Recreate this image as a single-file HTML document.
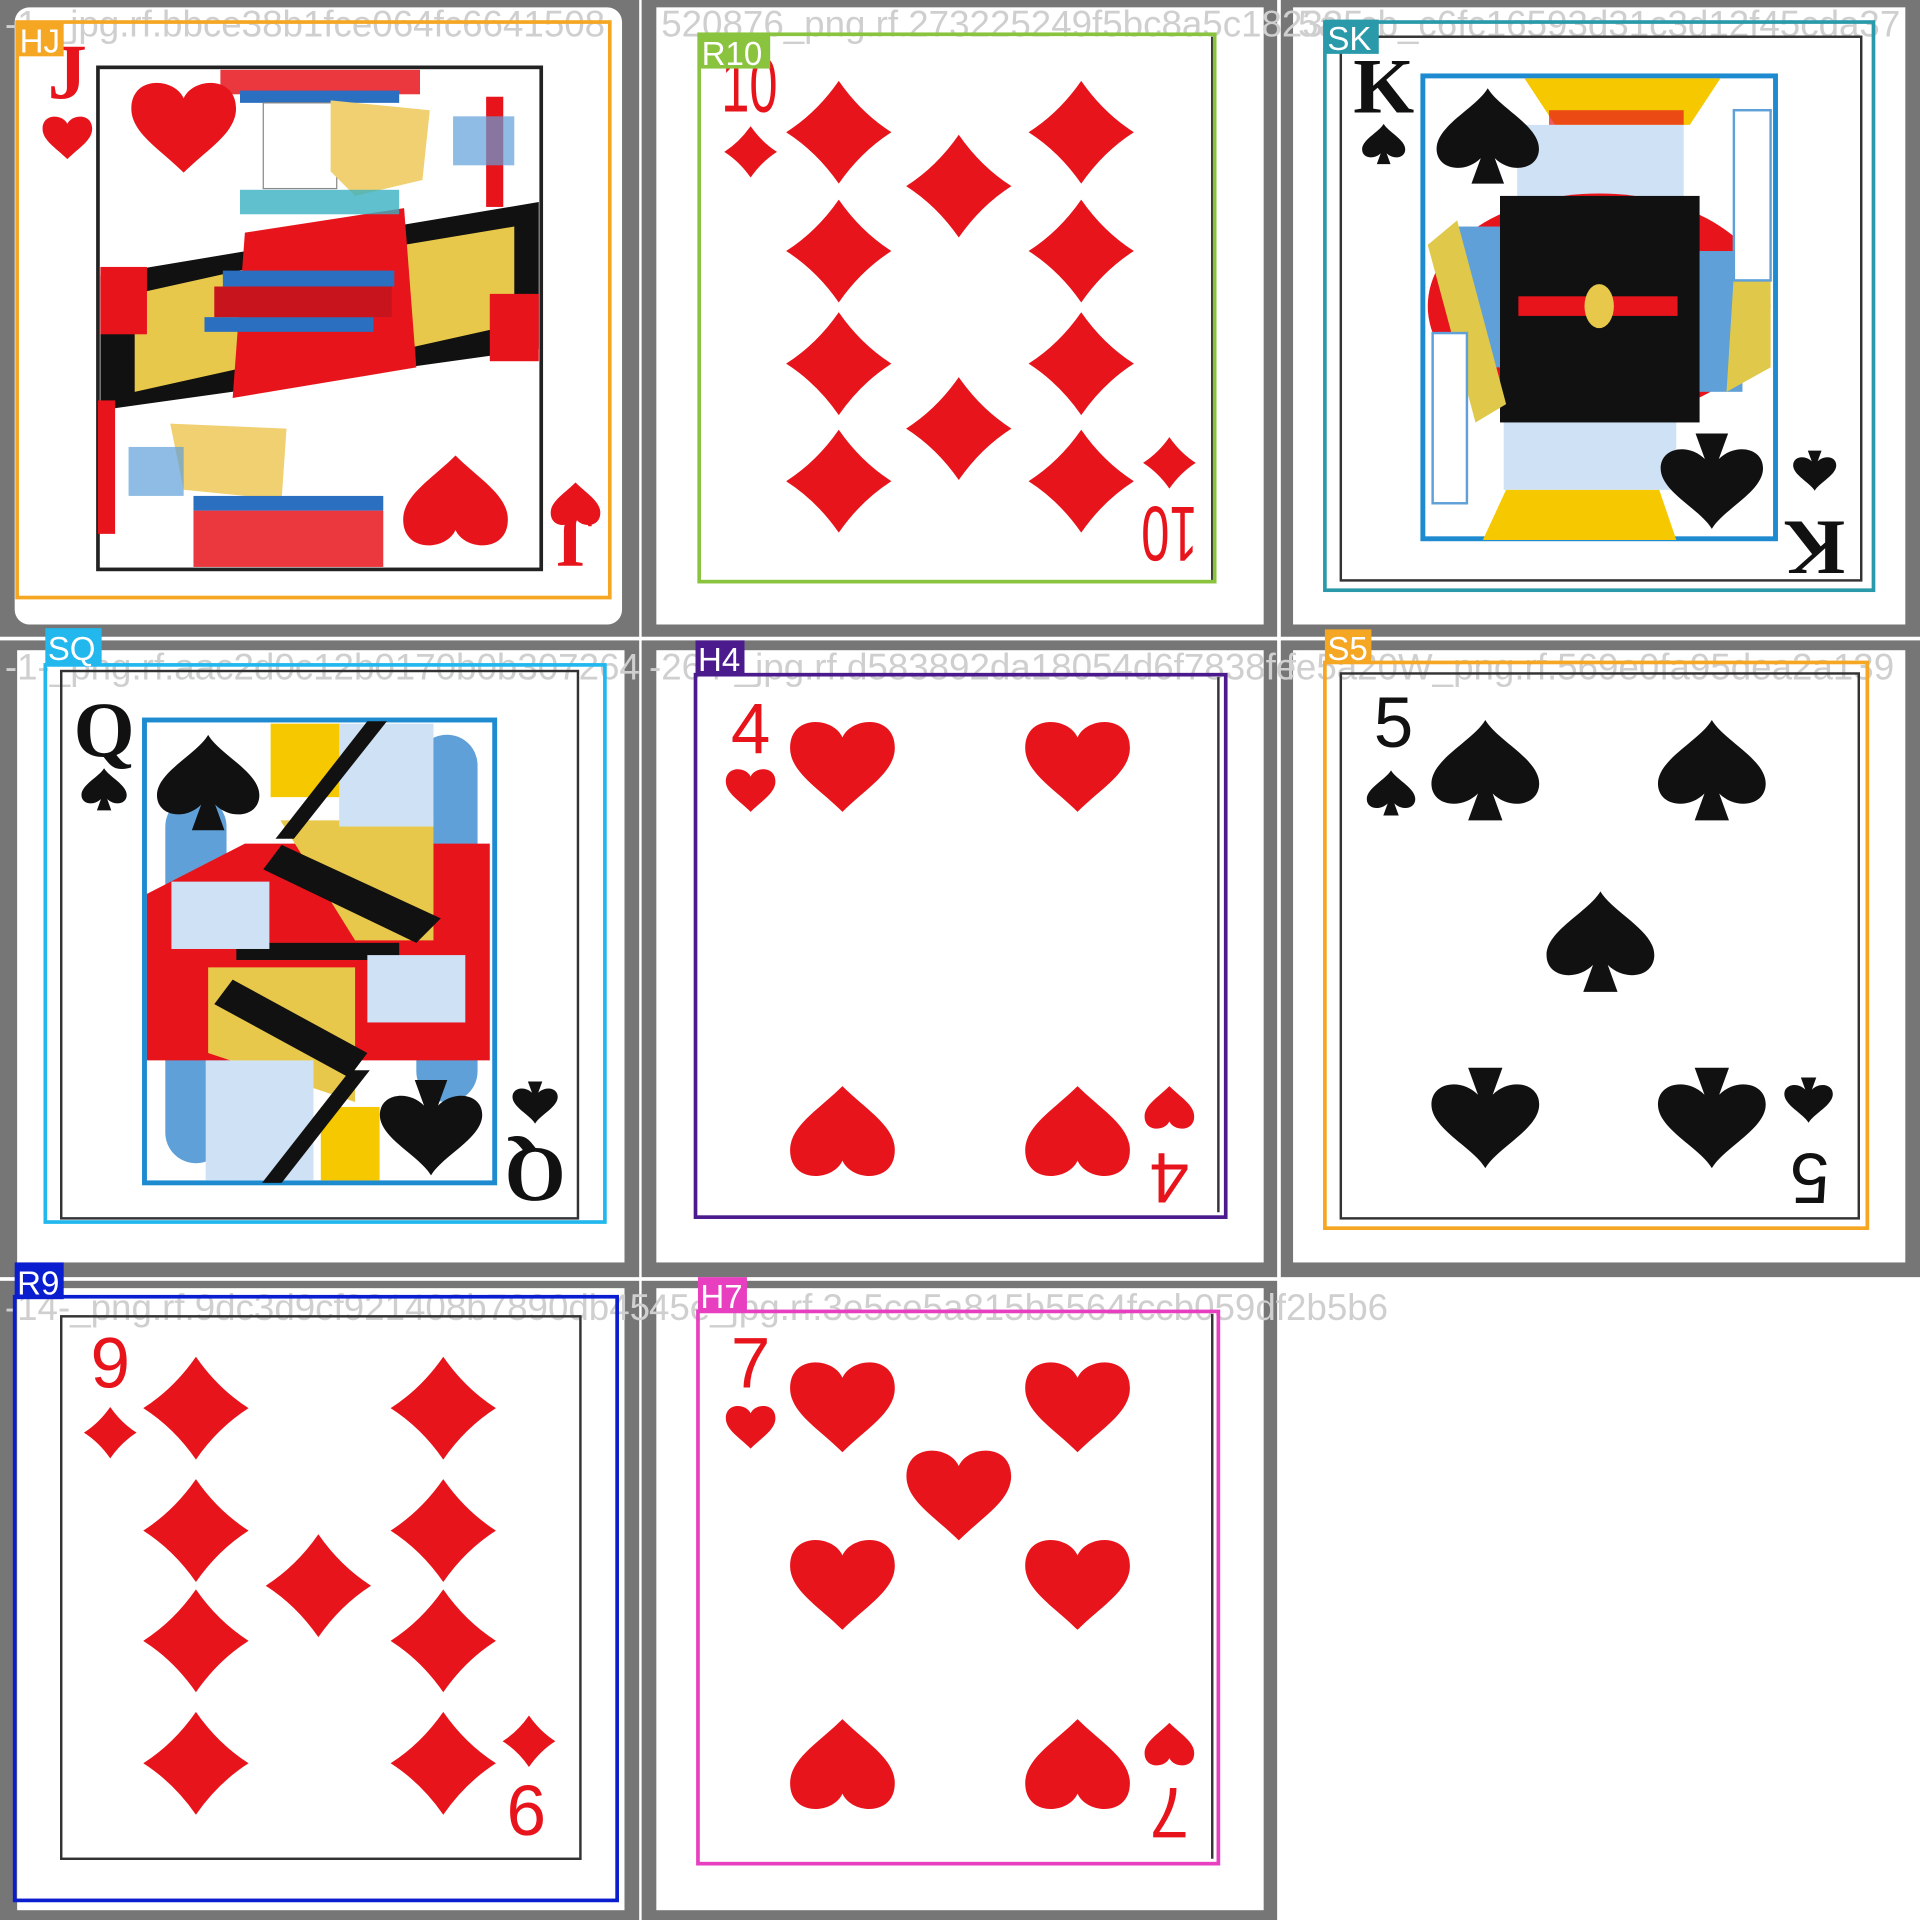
<!DOCTYPE html>
<html><head><meta charset="utf-8"><style>
html,body{margin:0;padding:0;background:#fff;width:1920px;height:1920px;overflow:hidden}
svg{display:block}
.fn{font-family:"Liberation Sans",sans-serif;font-size:30px;fill:#cfcfcf}
.lb{font-family:"Liberation Sans",sans-serif;font-size:27px;fill:#fff}
.rk{font-family:"Liberation Sans",sans-serif;font-size:58px}
.sr{font-family:"Liberation Serif",serif;font-size:64px;font-weight:bold}
</style></head><body>
<svg width="1920" height="1920" viewBox="0 0 1568 1568" xmlns="http://www.w3.org/2000/svg">
<defs>
<path id="h" d="M0,-24 C-8,-42 -45,-44 -45,-15 C-45,6 -20,20 0,40 C20,20 45,6 45,-15 C45,-44 8,-42 0,-24Z" fill="#e8141c"/>
<path id="s" d="M0,-42 C10,-25 44,-10 44,10 C44,28 20,32 6,18 L14,40 L-14,40 L-6,18 C-20,32 -44,28 -44,10 C-44,-10 -10,-25 0,-42Z" fill="#111"/>
<path id="d" d="M0,-42 Q18,-16 43,0 Q18,16 0,42 Q-18,16 -43,0 Q-18,-16 0,-42Z" fill="#e8141c"/>
</defs>
<rect width="1568" height="1568" fill="#fff"/>
<rect x="0" y="0" width="522" height="520" fill="#767676"/>
<rect x="524" y="0" width="519" height="520" fill="#767676"/>
<rect x="1046" y="0" width="522" height="520" fill="#767676"/>
<rect x="0" y="523" width="522" height="520" fill="#767676"/>
<rect x="524" y="523" width="519" height="520" fill="#767676"/>
<rect x="1046" y="523" width="522" height="520" fill="#767676"/>
<rect x="0" y="1046" width="522" height="522" fill="#767676"/>
<rect x="524" y="1046" width="519" height="522" fill="#767676"/>
<rect x="12" y="6" width="496" height="504" rx="12" fill="#fff"/>
<rect x="536" y="6" width="496" height="504" fill="#fff"/>
<rect x="1056" y="6" width="500" height="504" fill="#fff"/>
<rect x="14" y="531" width="496" height="500" fill="#fff"/>
<rect x="536" y="531" width="496" height="500" fill="#fff"/>
<rect x="1056" y="531" width="500" height="500" fill="#fff"/>
<rect x="14" y="1052" width="496" height="508" fill="#fff"/>
<rect x="536" y="1052" width="496" height="508" fill="#fff"/>

<text x="4" y="30" class="fn">-1-_jpg.rf.bbce38b1fce064fc6641508</text>
<text x="540" y="30" class="fn">520876_png.rf.273225249f5bc8a5c182335</text>
<text x="1060" y="30" class="fn">5a_cb_c6fc16593d31c3d12f45cda37</text>
<text x="4" y="555" class="fn">-1-_png.rf.aac2d0c12b0170b0b307264</text>
<text x="530" y="555" class="fn">-264-_jpg.rf.d583892da18054d6f7838fe</text>
<text x="1050" y="555" class="fn">fe5a20W_png.rf.569e0fa95dea2a139</text>
<text x="4" y="1078" class="fn">-14-_png.rf.9dc3d9cf921408b7890db45</text>
<text x="530" y="1078" class="fn">45e_jpg.rf.3e5ce5a815b5564fccb059df2b5b6</text>

<!-- HJ -->
<rect x="80" y="55" width="362" height="410" fill="#fff" stroke="#222" stroke-width="3"/>
<polygon points="82,225 440,165 440,285 82,335" fill="#111"/>
<polygon points="110,240 200,220 200,300 110,320" fill="#e8c84a"/>
<polygon points="330,200 420,185 420,265 330,285" fill="#e8c84a"/>
<polygon points="200,190 330,170 340,300 190,325" fill="#e8141c"/>
<rect x="82" y="218" width="38" height="55" fill="#e8141c"/>
<rect x="400" y="240" width="40" height="55" fill="#e8141c"/>
<rect x="182" y="221" width="140" height="13" fill="#2a6fc0"/>
<rect x="167" y="259" width="138" height="12" fill="#2a6fc0"/>
<rect x="175" y="234" width="145" height="25" fill="#c8141c"/>
<rect x="180" y="57" width="163" height="20" fill="#e8141c" opacity=".85"/>
<rect x="196" y="74" width="130" height="10" fill="#2a6fc0"/>
<rect x="215" y="84" width="60" height="70" fill="#fff" stroke="#888"/>
<polygon points="270,82 351,90 345,147 290,160 270,140" fill="#f0d070"/>
<rect x="196" y="155" width="130" height="20" fill="#3ab0c0" opacity=".8"/>
<polygon points="139,346 234,350 230,408 150,400" fill="#f0d070"/>
<rect x="158" y="405" width="155" height="12" fill="#2a6fc0"/>
<rect x="158" y="417" width="155" height="46" fill="#e8141c" opacity=".85"/>
<rect x="397" y="79" width="14" height="90" fill="#e8141c"/>
<rect x="80" y="327" width="14" height="109" fill="#e8141c"/>
<rect x="370" y="95" width="50" height="40" fill="#5fa0d8" opacity=".7"/>
<rect x="105" y="365" width="45" height="40" fill="#5fa0d8" opacity=".7"/>
<use href="#h" transform="translate(150,103) scale(.95)"/>
<use href="#h" transform="translate(372,410) rotate(180) scale(.95)"/>
<text x="55" y="80" class="sr" fill="#e8141c" text-anchor="middle">J</text>
<use href="#h" transform="translate(55,112) scale(.45)"/>
<text x="470" y="460" class="sr" fill="#e8141c" text-anchor="middle" transform="rotate(180 470 440)">J</text>
<use href="#h" transform="translate(470,412) rotate(180) scale(.45)"/>
<rect x="14" y="18" width="484" height="470" fill="none" stroke="#f5a623" stroke-width="3"/>
<rect x="14" y="18" width="38" height="28" fill="#f5a623"/>
<text x="16" y="43" class="lb">HJ</text>

<!-- R10 -->
<line x1="990" y1="30" x2="990" y2="474" stroke="#333" stroke-width="2"/>
<use href="#d" transform="translate(685,108)"/><use href="#d" transform="translate(883,108)"/>
<use href="#d" transform="translate(685,205)"/><use href="#d" transform="translate(883,205)"/>
<use href="#d" transform="translate(685,297)"/><use href="#d" transform="translate(883,297)"/>
<use href="#d" transform="translate(685,393)"/><use href="#d" transform="translate(883,393)"/>
<use href="#d" transform="translate(783,152)"/><use href="#d" transform="translate(783,350)"/>
<use href="#d" transform="translate(613,124) scale(.5)"/>
<use href="#d" transform="translate(955,378) scale(.5)"/>
<text x="612" y="91" font-family="Liberation Sans Narrow, Liberation Sans, sans-serif" font-size="64" fill="#e8141c" text-anchor="middle" textLength="46" lengthAdjust="spacingAndGlyphs">10</text>
<text x="955" y="458" font-family="Liberation Sans Narrow, Liberation Sans, sans-serif" font-size="64" fill="#e8141c" text-anchor="middle" textLength="46" lengthAdjust="spacingAndGlyphs" transform="rotate(180 955 436)">10</text>
<rect x="571" y="28" width="421" height="447" fill="none" stroke="#8ac43f" stroke-width="3"/>
<rect x="571" y="28" width="58" height="28" fill="#8ac43f"/>
<text x="573" y="53" class="lb">R10</text>

<!-- SK -->
<rect x="1095" y="30" width="425" height="444" fill="none" stroke="#333" stroke-width="2"/>
<rect x="1162" y="62" width="288" height="378" fill="#fff" stroke="#1e8ad0" stroke-width="4"/>
<polygon points="1245,64 1405,64 1380,102 1270,102" fill="#f5c800"/>
<rect x="1265" y="90" width="110" height="12" fill="#e8141c" opacity=".7"/>
<polygon points="1211,441 1369,441 1355,400 1230,400" fill="#f5c800"/>
<rect x="1239" y="102" width="136" height="75" fill="#cfe2f5"/>
<rect x="1228" y="324" width="141" height="76" fill="#cfe2f5"/>
<ellipse cx="1306" cy="250" rx="140" ry="92" fill="#e8141c"/>
<rect x="1225" y="160" width="163" height="185" fill="#111"/>
<rect x="1240" y="242" width="130" height="16" fill="#e8141c"/>
<ellipse cx="1306" cy="250" rx="12" ry="18" fill="#e8c84a"/>
<rect x="1190" y="185" width="35" height="115" fill="#5fa0d8"/>
<rect x="1388" y="205" width="35" height="115" fill="#5fa0d8"/>
<polygon points="1166,200 1190,180 1230,330 1205,345" fill="#e0c84a"/>
<polygon points="1420,160 1446,175 1446,300 1410,320" fill="#e0c84a"/>
<rect x="1170" y="272" width="28" height="139" fill="#fff" stroke="#5fa0d8" stroke-width="2"/>
<rect x="1416" y="90" width="30" height="139" fill="#fff" stroke="#5fa0d8" stroke-width="2"/>
<use href="#s" transform="translate(1215,112) scale(.95)"/>
<use href="#s" transform="translate(1398,392) rotate(180) scale(.95)"/>
<text x="1130" y="92" class="sr" fill="#111" text-anchor="middle">K</text>
<use href="#s" transform="translate(1130,118) scale(.4)"/>
<text x="1482" y="470" class="sr" fill="#111" text-anchor="middle" transform="rotate(180 1482 448)">K</text>
<use href="#s" transform="translate(1482,384) rotate(180) scale(.4)"/>
<rect x="1082" y="18" width="448" height="464" fill="none" stroke="#2a9aaa" stroke-width="3"/>
<rect x="1082" y="16" width="44" height="28" fill="#2a9aaa"/>
<text x="1084" y="41" class="lb">SK</text>

<!-- SQ -->
<rect x="50" y="548" width="422" height="447" fill="none" stroke="#333" stroke-width="2"/>
<rect x="118" y="588" width="286" height="378" fill="#fff" stroke="#1e8ad0" stroke-width="4"/>
<rect x="340" y="600" width="50" height="300" rx="25" fill="#5fa0d8"/>
<rect x="135" y="650" width="50" height="300" rx="25" fill="#5fa0d8"/>
<polygon points="120,730 200,689 400,689 400,866 320,866 120,866" fill="#e8141c"/>
<polygon points="229,670 354,670 354,768 290,768" fill="#e8c84a"/>
<polygon points="170,790 290,790 290,900 170,860" fill="#e8c84a"/>
<polygon points="230,690 360,750 340,770 215,710" fill="#111"/>
<polygon points="190,800 300,860 285,880 175,820" fill="#111"/>
<rect x="193" y="770" width="133" height="14" fill="#111"/>
<rect x="140" y="720" width="80" height="55" fill="#cfe2f5"/>
<rect x="300" y="780" width="80" height="55" fill="#cfe2f5"/>
<rect x="221" y="591" width="57" height="60" fill="#f5c800"/>
<rect x="262" y="904" width="48" height="60" fill="#f5c800"/>
<rect x="277" y="591" width="77" height="84" fill="#cfe2f5"/>
<rect x="168" y="866" width="88" height="98" fill="#cfe2f5"/>
<polygon points="300,589 316,589 240,685 225,685" fill="#111"/>
<polygon points="286,874 302,874 230,966 214,966" fill="#111"/>
<use href="#s" transform="translate(170,640) scale(.95)"/>
<use href="#s" transform="translate(352,920) rotate(180) scale(.95)"/>
<text x="85" y="618" class="sr" fill="#111" text-anchor="middle">Q</text>
<use href="#s" transform="translate(85,645) scale(.42)"/>
<text x="437" y="982" class="sr" fill="#111" text-anchor="middle" transform="rotate(180 437 960)">Q</text>
<use href="#s" transform="translate(437,900) rotate(180) scale(.42)"/>
<rect x="37" y="543" width="457" height="455" fill="none" stroke="#22b8ee" stroke-width="3"/>
<rect x="37" y="513" width="46" height="30" fill="#22b8ee"/>
<text x="39" y="539" class="lb">SQ</text>

<!-- H4 -->
<line x1="995" y1="553" x2="995" y2="990" stroke="#333" stroke-width="2"/>
<use href="#h" transform="translate(688,625) scale(.95)"/>
<use href="#h" transform="translate(880,625) scale(.95)"/>
<use href="#h" transform="translate(688,925) rotate(180) scale(.95)"/>
<use href="#h" transform="translate(880,925) rotate(180) scale(.95)"/>
<use href="#h" transform="translate(613,645) scale(.45)"/>
<use href="#h" transform="translate(955,905) rotate(180) scale(.45)"/>
<text x="613" y="615" class="rk" fill="#e8141c" text-anchor="middle">4</text>
<text x="955" y="982" class="rk" fill="#e8141c" text-anchor="middle" transform="rotate(180 955 962)">4</text>
<rect x="568" y="551" width="433" height="443" fill="none" stroke="#4b1a8c" stroke-width="3"/>
<rect x="568" y="523" width="40" height="28" fill="#4b1a8c"/>
<text x="570" y="548" class="lb">H4</text>

<!-- S5 -->
<rect x="1095" y="550" width="423" height="445" fill="none" stroke="#333" stroke-width="2"/>
<use href="#s" transform="translate(1213,630)"/>
<use href="#s" transform="translate(1398,630)"/>
<use href="#s" transform="translate(1307,770)"/>
<use href="#s" transform="translate(1213,912) rotate(180)"/>
<use href="#s" transform="translate(1398,912) rotate(180)"/>
<use href="#s" transform="translate(1136,648) scale(.45)"/>
<use href="#s" transform="translate(1477,898) rotate(180) scale(.45)"/>
<text x="1138" y="610" class="rk" fill="#111" text-anchor="middle">5</text>
<text x="1478" y="982" class="rk" fill="#111" text-anchor="middle" transform="rotate(180 1478 962)">5</text>
<rect x="1082" y="541" width="443" height="462" fill="none" stroke="#f5a623" stroke-width="3"/>
<rect x="1082" y="514" width="38" height="28" fill="#f5a623"/>
<text x="1084" y="539" class="lb">S5</text>

<!-- R9 -->
<rect x="50" y="1075" width="424" height="443" fill="none" stroke="#333" stroke-width="2"/>
<use href="#d" transform="translate(160,1150)"/><use href="#d" transform="translate(362,1150)"/>
<use href="#d" transform="translate(160,1250)"/><use href="#d" transform="translate(362,1250)"/>
<use href="#d" transform="translate(260,1295)"/>
<use href="#d" transform="translate(160,1340)"/><use href="#d" transform="translate(362,1340)"/>
<use href="#d" transform="translate(160,1440)"/><use href="#d" transform="translate(362,1440)"/>
<use href="#d" transform="translate(90,1170) scale(.5)"/>
<use href="#d" transform="translate(432,1422) scale(.5)"/>
<text x="90" y="1133" class="rk" fill="#e8141c" text-anchor="middle">9</text>
<text x="430" y="1502" class="rk" fill="#e8141c" text-anchor="middle" transform="rotate(180 430 1480)">9</text>
<rect x="12" y="1059" width="492" height="493" fill="none" stroke="#0a1ed0" stroke-width="3"/>
<rect x="12" y="1031" width="40" height="30" fill="#0a1ed0"/>
<text x="14" y="1057" class="lb">R9</text>

<!-- H7 -->
<line x1="990" y1="1073" x2="990" y2="1518" stroke="#333" stroke-width="2"/>
<use href="#h" transform="translate(688,1148) scale(.95)"/>
<use href="#h" transform="translate(880,1148) scale(.95)"/>
<use href="#h" transform="translate(783,1220) scale(.95)"/>
<use href="#h" transform="translate(688,1293) scale(.95)"/>
<use href="#h" transform="translate(880,1293) scale(.95)"/>
<use href="#h" transform="translate(688,1442) rotate(180) scale(.95)"/>
<use href="#h" transform="translate(880,1442) rotate(180) scale(.95)"/>
<use href="#h" transform="translate(613,1165) scale(.45)"/>
<use href="#h" transform="translate(955,1425) rotate(180) scale(.45)"/>
<text x="613" y="1133" class="rk" fill="#e8141c" text-anchor="middle">7</text>
<text x="955" y="1500" class="rk" fill="#e8141c" text-anchor="middle" transform="rotate(180 955 1480)">7</text>
<rect x="570" y="1071" width="425" height="451" fill="none" stroke="#e83ec0" stroke-width="3"/>
<rect x="570" y="1043" width="40" height="28" fill="#e83ec0"/>
<text x="572" y="1068" class="lb">H7</text>
</svg>
</body></html>
